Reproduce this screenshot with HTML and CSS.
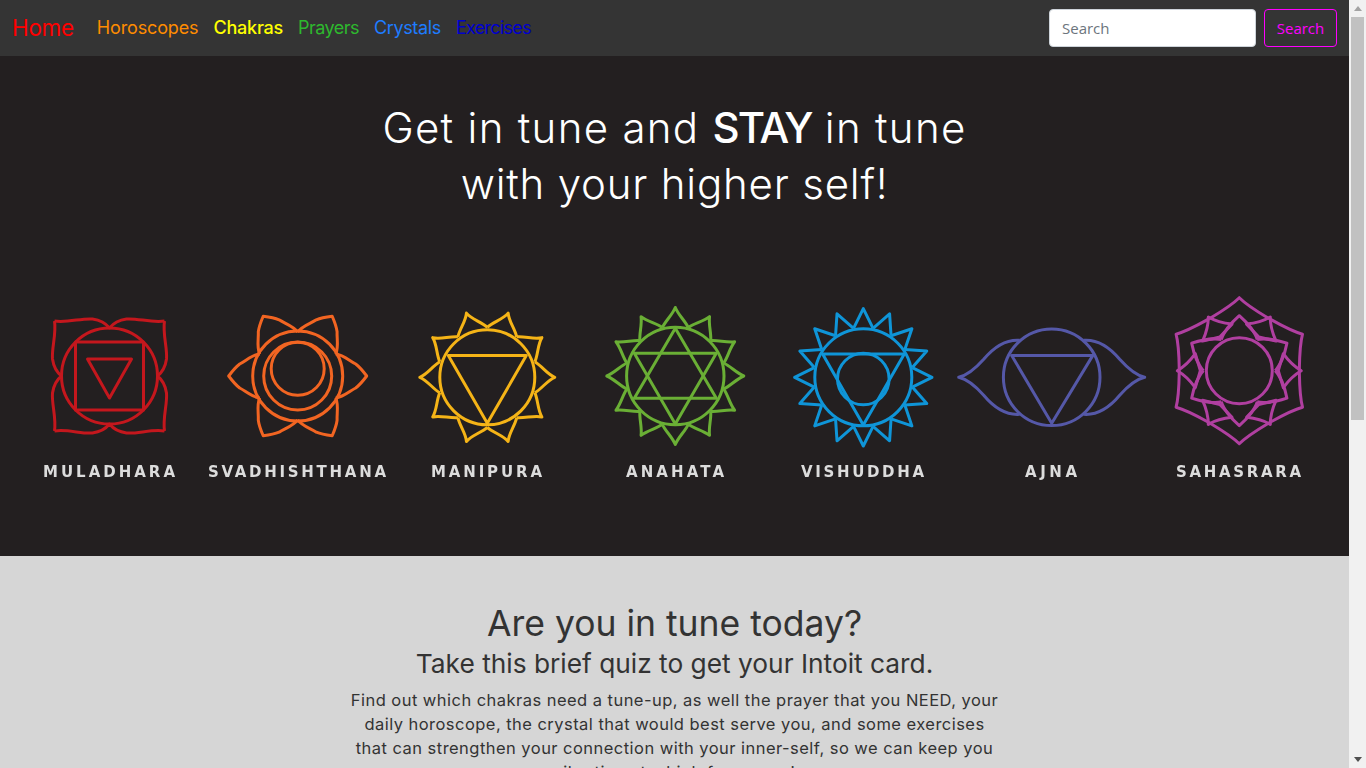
FILE: index.html
```html
<!DOCTYPE html>
<html lang="en">
<head>
    <meta charset="UTF-8">
    <meta name="viewport" content="width=device-width, initial-scale=1.0">
    <title>Intoit</title>
    <link rel="stylesheet" href="styles.css">
</head>
<body>
    <div class="page">
        <nav class="navbar">
            <a class="brand" href="#">Home</a>
            <ul class="nav-links">
                <li><a class="link-orange" href="#">Horoscopes</a></li>
                <li><a class="link-yellow" href="#">Chakras</a></li>
                <li><a class="link-green" href="#">Prayers</a></li>
                <li><a class="link-blue" href="#">Crystals</a></li>
                <li><a class="link-navy" href="#">Exercises</a></li>
            </ul>
            <form class="search-form">
                <input class="search-input" type="text" placeholder="Search">
                <button class="search-button" type="button">Search</button>
            </form>
        </nav>

        <section class="hero">
            <h1 class="hero-title"><span class="hero-first">Get in tune and <strong>STAY</strong> in tune</span><br>with your higher self!</h1>

            <svg class="chakras" viewBox="0 280 1349 220" width="1349" height="220">
                <defs>
                    <path id="lotus-side" d="M-55,-55 C-42,-53 -28,-58 -17,-57 C-10,-56 -4,-53 0,-48 C4,-53 10,-56 17,-57 C28,-58 42,-53 55,-55"/>
                    <path id="petal-six" d="M38,-22 C46,-21 52,-15 58,-12 C62,-9 66,-4 69,0 C66,4 62,9 58,12 C52,15 46,21 38,22"/>
                    <path id="petal-ten" d="M47.5,-15.5 C55,-11 60,-3 67.5,0 C60,3 55,11 47.5,15.5"/>
                    <path id="petal-twelve" d="M48.3,-13 C55,-10 61,-3 68.5,0 C61,3 55,10 48.3,13"/>
                    <path id="petal-sixteen" d="M49,-9.75 L68.7,0 L49,9.75"/>
                    <path id="crown-outer" d="M52,-30 C58,-20 65,-8 73,0 C65,8 58,20 52,30"/>
                    <path id="crown-diamond" d="M39,0 L44,-17 C49,-10 55,-4 62,0 C55,4 49,10 44,17 Z"/>
                    <path id="crown-inner" d="M31,-18 C38,-16 48,-8 55,0 C48,8 38,16 31,18"/>
                </defs>

                <!-- Muladhara -->
                <g class="chakra red" transform="translate(109.5 376)">
                    <use href="#lotus-side"/>
                    <use href="#lotus-side" transform="rotate(90)"/>
                    <use href="#lotus-side" transform="rotate(180)"/>
                    <use href="#lotus-side" transform="rotate(270)"/>
                    <circle r="48"/>
                    <rect x="-34" y="-34" width="68" height="68"/>
                    <path d="M-22,-17 L22,-17 L0,22 Z"/>
                </g>

                <!-- Svadhishthana -->
                <g class="chakra orange" transform="translate(297.7 376)">
                    <use href="#petal-six"/>
                    <use href="#petal-six" transform="rotate(60)"/>
                    <use href="#petal-six" transform="rotate(120)"/>
                    <use href="#petal-six" transform="rotate(180)"/>
                    <use href="#petal-six" transform="rotate(240)"/>
                    <use href="#petal-six" transform="rotate(300)"/>
                    <circle r="45"/>
                    <circle r="34"/>
                    <circle cy="-7.3" r="26.5"/>
                </g>

                <!-- Manipura -->
                <g class="chakra yellow" transform="translate(487.3 377.3)">
                    <use href="#petal-ten" transform="rotate(0)"/>
                    <use href="#petal-ten" transform="rotate(36)"/>
                    <use href="#petal-ten" transform="rotate(72)"/>
                    <use href="#petal-ten" transform="rotate(108)"/>
                    <use href="#petal-ten" transform="rotate(144)"/>
                    <use href="#petal-ten" transform="rotate(180)"/>
                    <use href="#petal-ten" transform="rotate(216)"/>
                    <use href="#petal-ten" transform="rotate(252)"/>
                    <use href="#petal-ten" transform="rotate(288)"/>
                    <use href="#petal-ten" transform="rotate(324)"/>
                    <circle r="47.5"/>
                    <path d="M-39,-21.7 L39,-21.7 L0,46 Z"/>
                </g>

                <!-- Anahata -->
                <g class="chakra green" transform="translate(675.3 376)">
                    <use href="#petal-twelve"/>
                    <use href="#petal-twelve" transform="rotate(30)"/>
                    <use href="#petal-twelve" transform="rotate(60)"/>
                    <use href="#petal-twelve" transform="rotate(90)"/>
                    <use href="#petal-twelve" transform="rotate(120)"/>
                    <use href="#petal-twelve" transform="rotate(150)"/>
                    <use href="#petal-twelve" transform="rotate(180)"/>
                    <use href="#petal-twelve" transform="rotate(210)"/>
                    <use href="#petal-twelve" transform="rotate(240)"/>
                    <use href="#petal-twelve" transform="rotate(270)"/>
                    <use href="#petal-twelve" transform="rotate(300)"/>
                    <use href="#petal-twelve" transform="rotate(330)"/>
                    <circle r="48.7"/>
                    <path d="M0,-47.7 L41,22.3 L-41,22.3 Z"/>
                    <path d="M0,48 L-41,-22.7 L41,-22.7 Z"/>
                </g>

                <!-- Vishuddha -->
                <g class="chakra blue" transform="translate(863.3 377.3)">
                    <use href="#petal-sixteen"/>
                    <use href="#petal-sixteen" transform="rotate(22.5)"/>
                    <use href="#petal-sixteen" transform="rotate(45)"/>
                    <use href="#petal-sixteen" transform="rotate(67.5)"/>
                    <use href="#petal-sixteen" transform="rotate(90)"/>
                    <use href="#petal-sixteen" transform="rotate(112.5)"/>
                    <use href="#petal-sixteen" transform="rotate(135)"/>
                    <use href="#petal-sixteen" transform="rotate(157.5)"/>
                    <use href="#petal-sixteen" transform="rotate(180)"/>
                    <use href="#petal-sixteen" transform="rotate(202.5)"/>
                    <use href="#petal-sixteen" transform="rotate(225)"/>
                    <use href="#petal-sixteen" transform="rotate(247.5)"/>
                    <use href="#petal-sixteen" transform="rotate(270)"/>
                    <use href="#petal-sixteen" transform="rotate(292.5)"/>
                    <use href="#petal-sixteen" transform="rotate(315)"/>
                    <use href="#petal-sixteen" transform="rotate(337.5)"/>
                    <circle r="48.5"/>
                    <path d="M-40.7,-23.3 L41,-23.3 L0,47.7 Z"/>
                    <circle cy="1.7" r="25.8"/>
                </g>

                <!-- Ajna -->
                <g class="chakra indigo" transform="translate(1051.7 377.3)">
                    <path d="M-32,-37 C-45,-38 -58,-30 -68,-18 C-76,-9 -84,-2 -93,0 C-84,2 -76,9 -68,18 C-58,30 -45,38 -32,37"/>
                    <path d="M32,-37 C45,-38 58,-30 68,-18 C76,-9 84,-2 93,0 C84,2 76,9 68,18 C58,30 45,38 32,37"/>
                    <circle r="48.3"/>
                    <path d="M-40,-21.7 L41,-21.7 L0,46 Z"/>
                </g>

                <!-- Sahasrara -->
                <g class="chakra magenta" transform="translate(1239.3 370.7)">
                    <use href="#crown-outer" transform="rotate(30)"/>
                    <use href="#crown-outer" transform="rotate(90)"/>
                    <use href="#crown-outer" transform="rotate(150)"/>
                    <use href="#crown-outer" transform="rotate(210)"/>
                    <use href="#crown-outer" transform="rotate(270)"/>
                    <use href="#crown-outer" transform="rotate(330)"/>
                    <use href="#crown-diamond"/>
                    <use href="#crown-diamond" transform="rotate(60)"/>
                    <use href="#crown-diamond" transform="rotate(120)"/>
                    <use href="#crown-diamond" transform="rotate(180)"/>
                    <use href="#crown-diamond" transform="rotate(240)"/>
                    <use href="#crown-diamond" transform="rotate(300)"/>
                    <use href="#crown-inner" transform="rotate(30)"/>
                    <use href="#crown-inner" transform="rotate(90)"/>
                    <use href="#crown-inner" transform="rotate(150)"/>
                    <use href="#crown-inner" transform="rotate(210)"/>
                    <use href="#crown-inner" transform="rotate(270)"/>
                    <use href="#crown-inner" transform="rotate(330)"/>
                    <circle r="33"/>
                </g>

                <text class="chakra-label" x="43" y="476.5" textLength="132">MULADHARA</text>
                <text class="chakra-label" x="208" y="476.5" textLength="178">SVADHISHTHANA</text>
                <text class="chakra-label" x="431" y="476.5" textLength="111">MANIPURA</text>
                <text class="chakra-label" x="626" y="476.5" textLength="98">ANAHATA</text>
                <text class="chakra-label" x="801" y="476.5" textLength="123">VISHUDDHA</text>
                <text class="chakra-label" x="1025" y="476.5" textLength="52">AJNA</text>
                <text class="chakra-label" x="1176" y="476.5" textLength="125">SAHASRARA</text>
            </svg>
        </section>

        <section class="quiz">
            <h2 class="quiz-title">Are you in tune today?</h2>
            <h3 class="quiz-subtitle">Take this brief quiz to get your Intoit card.</h3>
            <p class="quiz-text">Find out which chakras need a tune-up, as well the prayer that you NEED, your<br>daily horoscope, the crystal that would best serve you, and some exercises<br>that can strengthen your connection with your inner-self, so we can keep you<br>vibrating at a high frequency!</p>
        </section>
    </div>

    <div class="scrollbar">
        <div class="scroll-arrow"><span class="arrow-up"></span></div>
        <div class="scroll-thumb"></div>
        <div class="scroll-track"></div>
        <div class="scroll-arrow"><span class="arrow-down"></span></div>
    </div>
</body>
</html>
```

FILE: styles.css
```css
* {
    margin: 0;
    padding: 0;
    box-sizing: border-box;
}

body {
    height: 100vh;
    display: flex;
    overflow: hidden;
    font-family: Inter, "Open Sans", sans-serif;
    background-color: #d6d6d6;
}

.page {
    flex: 1;
    min-width: 0;
    height: 100vh;
    overflow: hidden;
}

/* Navbar */
.navbar {
    height: 56px;
    display: flex;
    align-items: center;
    padding: 0 12px 1px 12px;
    background-color: #343434;
}

.navbar a {
    text-decoration: none;
}

.brand {
    font-size: 22.5px;
    color: #ff0000;
    margin-right: 23px;
    letter-spacing: -0.3px;
}

.nav-links {
    display: flex;
    list-style: none;
    gap: 15px;
    font-size: 18px;
    letter-spacing: -0.15px;
}

.link-orange { color: #ff8c00; }
.link-yellow { color: #ffff00; font-weight: 500; letter-spacing: -0.2px; }
.link-green { color: #2eb82e; letter-spacing: -0.55px; }
.link-blue { color: #1e7cff; letter-spacing: -0.35px; }
.link-navy { color: #0000cd; letter-spacing: -0.7px; }

.search-form {
    display: flex;
    gap: 8px;
    margin-left: auto;
}

.search-input {
    width: 207px;
    height: 38px;
    padding: 0 12px;
    border: 1px solid #ced4da;
    border-radius: 4px;
    font-family: "Open Sans", sans-serif;
    font-size: 15px;
    color: #495057;
    background: #fff;
}

.search-input::placeholder {
    color: #6c757d;
}

.search-button {
    width: 73px;
    height: 38px;
    border: 1px solid #ff00ff;
    border-radius: 4px;
    font-family: "Open Sans", sans-serif;
    font-size: 15px;
    color: #ff00ff;
    background: transparent;
}

/* Hero */
.hero {
    height: 500px;
    padding-top: 44px;
    background-color: #231f20;
}

.hero-title {
    font-size: 42px;
    font-weight: 300;
    line-height: 56px;
    text-align: center;
    color: #fff;
    letter-spacing: 0.8px;
}

.hero-first {
    letter-spacing: 1.3px;
}

.hero-title strong {
    font-weight: 500;
    letter-spacing: -1.9px;
}

.chakras {
    display: block;
    margin-top: 68px;
    filter: blur(0.45px);
}

.chakra {
    fill: none;
    stroke-width: 3;
    stroke-linejoin: round;
}

.red { stroke: #c4171d; }
.orange { stroke: #f26522; }
.yellow { stroke: #f5b417; }
.green { stroke: #6aaf35; }
.blue { stroke: #0f95d8; }
.indigo { stroke: #5558a8; }
.magenta { stroke: #b03fa0; }

.chakra-label {
    font-family: "DejaVu Sans", sans-serif;
    font-size: 15px;
    font-weight: 700;
    fill: #dcdcdc;
}

/* Quiz */
.quiz {
    padding-top: 46px;
    text-align: center;
    color: #333;
}

.quiz-title {
    font-size: 35.5px;
    font-weight: 400;
    line-height: 43px;
}

.quiz-subtitle {
    font-size: 26.3px;
    font-weight: 400;
    line-height: 38px;
}

.quiz-text {
    margin-top: 5px;
    font-size: 16.5px;
    line-height: 24px;
    letter-spacing: 0.46px;
}

/* Scrollbar */
.scrollbar {
    width: 17px;
    height: 100vh;
    display: flex;
    flex-direction: column;
    background-color: #f1f1f1;
}

.scroll-arrow {
    height: 17px;
    display: flex;
    align-items: center;
    justify-content: center;
}

.arrow-up {
    border-left: 4px solid transparent;
    border-right: 4px solid transparent;
    border-bottom: 5px solid #a3a3a3;
}

.arrow-down {
    border-left: 4px solid transparent;
    border-right: 4px solid transparent;
    border-top: 5px solid #505050;
}

.scroll-thumb {
    height: 403px;
    margin: 0 2px;
    background-color: #c1c1c1;
}

.scroll-track {
    flex: 1;
}
```
